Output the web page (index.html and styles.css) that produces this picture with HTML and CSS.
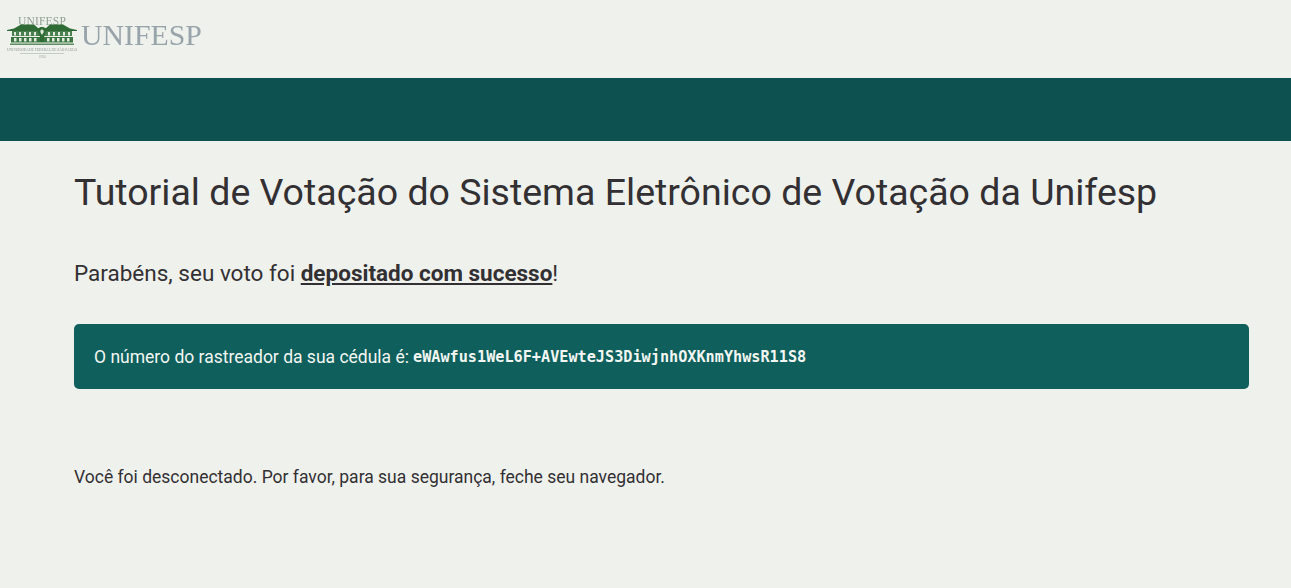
FILE: index.html
```html
<!DOCTYPE html>
<html lang="pt-BR">
<head>
  <meta charset="UTF-8" />
  <meta name="viewport" content="width=device-width, initial-scale=1" />
  <title>Tutorial de Votação</title>
  <link rel="stylesheet" href="styles.css">
</head>
<body>

  <header class="top">
    <div class="logo">
      <div class="logo-mark">
        <span class="logo-small">UNIFESP</span>
        <svg class="logo-building" width="70" height="23" viewBox="0 0 70 23">
          <!-- roof -->
          <path d="M0 7 L7 5.5 L14 1.5 H27 L31 5 H39 L43 1.5 H56 L63 5.5 L70 7 V8 H0 Z" fill="#2f6b34"/>
          <!-- upper floor -->
          <rect x="5" y="8" width="60" height="5" fill="#4a7f4e"/>
          <rect x="7" y="9" width="2" height="3.5" fill="#e3ebe0"/>
          <rect x="12" y="9" width="2" height="3.5" fill="#e3ebe0"/>
          <rect x="17" y="9" width="2" height="3.5" fill="#e3ebe0"/>
          <rect x="22" y="9" width="2" height="3.5" fill="#e3ebe0"/>
          <rect x="27" y="9" width="2" height="3.5" fill="#e3ebe0"/>
          <rect x="41" y="9" width="2" height="3.5" fill="#e3ebe0"/>
          <rect x="46" y="9" width="2" height="3.5" fill="#e3ebe0"/>
          <rect x="51" y="9" width="2" height="3.5" fill="#e3ebe0"/>
          <rect x="56" y="9" width="2" height="3.5" fill="#e3ebe0"/>
          <rect x="61" y="9" width="2" height="3.5" fill="#e3ebe0"/>
          <!-- lower floor -->
          <rect x="4" y="14" width="62" height="5.5" fill="#3b7540"/>
          <rect x="7" y="15" width="2.5" height="3.5" fill="#e3ebe0"/>
          <rect x="12" y="15" width="2.5" height="3.5" fill="#e3ebe0"/>
          <rect x="17" y="15" width="2.5" height="3.5" fill="#e3ebe0"/>
          <rect x="22" y="15" width="2.5" height="3.5" fill="#e3ebe0"/>
          <rect x="27" y="15" width="2.5" height="3.5" fill="#e3ebe0"/>
          <rect x="40" y="15" width="2.5" height="3.5" fill="#e3ebe0"/>
          <rect x="45" y="15" width="2.5" height="3.5" fill="#e3ebe0"/>
          <rect x="50" y="15" width="2.5" height="3.5" fill="#e3ebe0"/>
          <rect x="55" y="15" width="2.5" height="3.5" fill="#e3ebe0"/>
          <rect x="60" y="15" width="2.5" height="3.5" fill="#e3ebe0"/>
          <!-- torch in the middle -->
          <path d="M35 4 C38 4 39.5 6 39 9 L37 14 V19 H33 V14 L31 9 C30.5 6 32 4 35 4 Z" fill="#2f6b34"/>
          <path d="M35 6.5 C36.5 6.5 37 8 36.5 9.5 L35 12 L33.5 9.5 C33 8 33.5 6.5 35 6.5 Z" fill="#dfe8dc"/>
          <!-- base -->
          <rect x="3" y="20.5" width="64" height="1.5" fill="#5d8c60"/>
        </svg>
        <span class="logo-tiny">UNIVERSIDADE FEDERAL DE SÃO PAULO</span>
        <span class="logo-rule"></span>
        <span class="logo-year">1994</span>
      </div>
      <span class="logo-name">UNIFESP</span>
    </div>
  </header>

  <div class="band"></div>

  <main class="content">
    <h1>Tutorial de Votação do Sistema Eletrônico de Votação da Unifesp</h1>
    <p class="lead">Parabéns, seu voto foi <a href="#"><strong>depositado com sucesso</strong></a>!</p>
    <div class="tracker">
      O número do rastreador da sua cédula é:
      <code>eWAwfus1WeL6F+AVEwteJS3DiwjnhOXKnmYhwsR11S8</code>
    </div>
    <p class="bye">Você foi desconectado. Por favor, para sua segurança, feche seu navegador.</p>
  </main>

</body>
</html>
```

FILE: styles.css
```css
body {
  margin: 0;
  font-family: Roboto, Arial, sans-serif;
  background: #eff1ed;
  color: #333033;
}

.top {
  height: 78px;
}

.logo {
  display: flex;
  align-items: flex-start;
  padding: 15px 0 0 7px;
}

.logo-mark {
  display: flex;
  flex-direction: column;
  align-items: center;
  width: 70px;
  padding-top: 4px;
  filter: blur(0.6px);
}

.logo-small {
  font-family: "Liberation Serif", serif;
  font-size: 11.5px;
  line-height: 4px;
  letter-spacing: 0.2px;
  color: #8fa091;
}

.logo-building {
  display: block;
}

.logo-tiny {
  margin-top: 2px;
  font-family: "Liberation Serif", serif;
  font-size: 3.6px;
  line-height: 4px;
  white-space: nowrap;
  color: #8f9a92;
}

.logo-rule {
  width: 44px;
  height: 1px;
  margin-top: 1px;
  background: #c3d0c1;
}

.logo-year {
  margin-top: 1px;
  font-family: "Liberation Serif", serif;
  font-size: 3.6px;
  line-height: 4px;
  color: #a5ada6;
}

.logo-name {
  margin: 2px 0 0 4px;
  font-family: "Liberation Serif", serif;
  font-size: 29.8px;
  line-height: 36px;
  color: #98a3aa;
  filter: blur(0.5px);
}

.band {
  height: 63px;
  background: #0d5250;
}

.content {
  padding: 0 42px 0 74px;
}

h1 {
  margin: 28px 0 0;
  font-size: 37.5px;
  font-weight: 400;
  line-height: 46px;
}

.lead {
  margin: 42px 0 0;
  font-size: 22.5px;
  line-height: 32px;
}

.lead a {
  color: inherit;
}

.tracker {
  margin-top: 35px;
  padding: 0 20px;
  height: 65px;
  display: flex;
  align-items: center;
  gap: 4px;
  border-radius: 5px;
  background: #0f5f5c;
  color: #f2f6f2;
  font-size: 17.5px;
}

.tracker code {
  font-family: "DejaVu Sans Mono", monospace;
  font-size: 15.2px;
  font-weight: 700;
}

.bye {
  margin: 76px 0 0;
  font-size: 17.5px;
  line-height: 24px;
}
```
